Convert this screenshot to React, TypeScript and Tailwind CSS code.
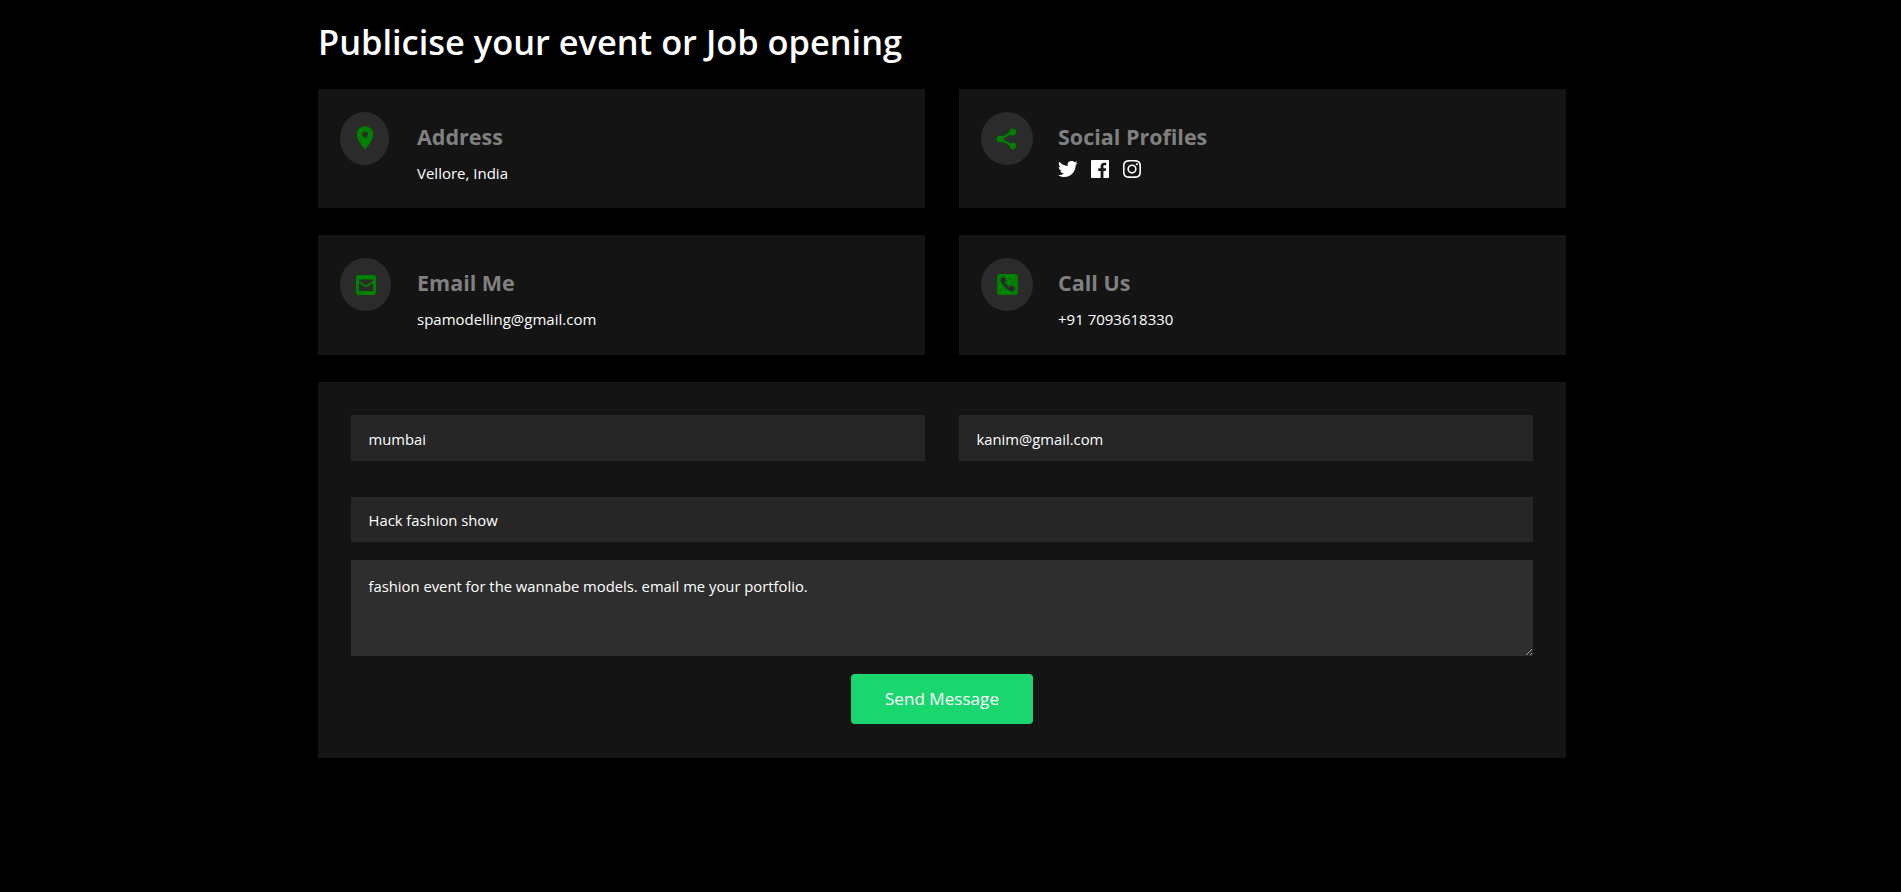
import { BiSolidShareAlt, BiLogoTwitter, BiLogoFacebookSquare, BiLogoInstagram } from "react-icons/bi";
import { MdLocationOn } from "react-icons/md";
import type { ReactNode } from "react";

function MailSquare() {
  return (
    <svg viewBox="0 0 24 24" className="w-[24px] h-[24px]">
      <path
        fill="#008000"
        fillRule="evenodd"
        d="M4 2h16a2 2 0 0 1 2 2v16a2 2 0 0 1-2 2H4a2 2 0 0 1-2-2V4a2 2 0 0 1 2-2zm1 4.500V8l7 4.500L19 8V6.500zM5 10v8h14v-8l-7 4.500z"
      />
    </svg>
  );
}

function PhoneSquare() {
  return (
    <svg viewBox="0 0 24 24" className="w-[25px] h-[25px]">
      <path
        fill="#008000"
        fillRule="evenodd"
        d="M4 2h16a2 2 0 0 1 2 2v16a2 2 0 0 1-2 2H4a2 2 0 0 1-2-2V4a2 2 0 0 1 2-2zm3.500 2.500L5.700 6c-.5.5-.6 1.200-.4 2 .8 3 4.700 8.800 10.500 10.600.8.200 1.500 0 2-.5l1.500-1.700c.3-.4.300-.9 0-1.200l-3-2.200c-.4-.3-.9-.2-1.200.1l-1.100 1.300c-2-1-3.600-2.800-4.500-4.800l1.300-1.100c.3-.3.400-.8.100-1.200L8.700 4.600c-.3-.4-.8-.4-1.200-.1z"
      />
    </svg>
  );
}

function InfoCard({ icon, circle, title, children }: { icon: ReactNode; circle: string; title: string; children: ReactNode }) {
  return (
    <div className="bg-[#141414] pl-[22px] pt-[23px] flex">
      <div className="w-[77px] shrink-0">
        <div className={`${circle} h-[53px] rounded-[50%] bg-[#2b2b2b] flex items-center justify-center`}>
          {icon}
        </div>
      </div>
      <div className="pt-[8px]">
        <h3 className="text-[21.5px] leading-[33px] font-bold text-[#808080]">{title}</h3>
        {children}
      </div>
    </div>
  );
}

export default function App() {
  return (
    <div className="min-h-[892px] bg-black text-white font-['Open_Sans','Noto_Sans',sans-serif]">
      <div className="w-[1248px] ml-[318px]">
        <h1 className="text-[34.4px] leading-[43px] font-semibold pt-[20px] mb-[26px]">Publicise your event or Job opening</h1>

        <div className="grid grid-cols-2 grid-rows-[119px_120px] gap-x-[34px] gap-y-[27px]">
          <InfoCard circle="w-[49px]" icon={<MdLocationOn className="text-[28px] text-[#008000] mb-[2px]" />} title="Address">
            <p className="text-[15px] leading-[22px] mt-[9px]">Vellore, India</p>
          </InfoCard>
          <InfoCard circle="w-[52px]" icon={<BiSolidShareAlt className="text-[28px] text-[#008000]" />} title="Social Profiles">
            <div className="flex gap-[8px] mt-[4px] -ml-[2px]">
              <BiLogoTwitter className="text-[24px] text-white" />
              <BiLogoFacebookSquare className="text-[24px] text-white" />
              <BiLogoInstagram className="text-[24px] text-white" />
            </div>
          </InfoCard>
          <InfoCard circle="w-[51px]" icon={<MailSquare />} title="Email Me">
            <p className="text-[15px] leading-[22px] mt-[9px]">spamodelling@gmail.com</p>
          </InfoCard>
          <InfoCard circle="w-[52px]" icon={<PhoneSquare />} title="Call Us">
            <p className="text-[15px] leading-[22px] mt-[9px]">+91 7093618330</p>
          </InfoCard>
        </div>

        <form className="mt-[27px] h-[376px] bg-[#141414] px-[33px] pt-[33px]">
          <div className="grid grid-cols-2 gap-x-[34px]">
            <input readOnly value="mumbai" className="h-[46px] pt-[2px] px-[17.5px] bg-[#262626] text-[14.8px] text-white outline-none" />
            <input readOnly value="kanim@gmail.com" className="h-[46px] pt-[2px] px-[17.5px] bg-[#262626] text-[14.8px] text-white outline-none" />
          </div>
          <input readOnly value="Hack fashion show" className="block w-full h-[45px] mt-[36px] px-[17.5px] bg-[#262626] text-[14.8px] text-white outline-none" />
          <textarea readOnly value="fashion event for the wannabe models. email me your portfolio." className="block w-full h-[96px] mt-[18px] px-[17.5px] py-[15px] bg-[#2e2e2e] text-[14.8px] leading-[22px] text-white outline-none" />
          <div className="flex justify-center mt-[18px]">
            <button type="button" className="w-[182px] h-[50px] rounded-[4px] bg-[#19d66f] text-[17.1px] text-white">Send Message</button>
          </div>
        </form>
      </div>
    </div>
  );
}
